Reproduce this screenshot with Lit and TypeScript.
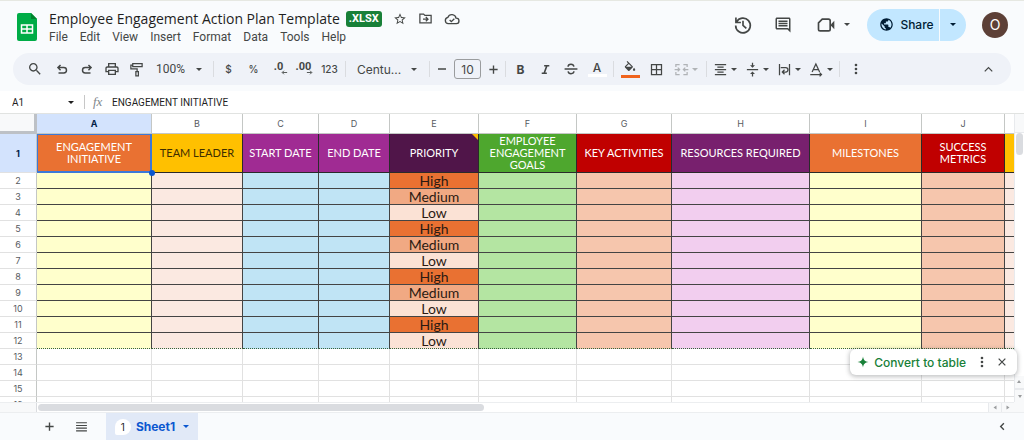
import { LitElement, html, css, svg } from "lit";
import { customElement, state } from "lit/decorators.js";
import { classMap } from "lit/directives/class-map.js";

const stroke = (d: string, w = 2) =>
  svg`<path d=${d} fill="none" stroke="currentColor" stroke-width=${w}></path>`;
const fill = (d: string) => svg`<path d=${d}></path>`;

const ICONS: Record<string, unknown> = {
  search: fill("M15.5 14h-.79l-.28-.27C15.41 12.59 16 11.11 16 9.5 16 5.91 13.09 3 9.5 3S3 5.91 3 9.5 5.91 16 9.5 16c1.61 0 3.09-.59 4.23-1.57l.27.28v.79l5 4.99L20.49 19l-4.99-5zm-6 0C7.01 14 5 11.99 5 9.5S7.01 5 9.5 5 14 7.01 14 9.5 11.99 14 9.5 14z"),
  undo: stroke("M9.500 5L5 9.500l4.500 4.500M5.500 9.500H15a4.700 4.700 0 0 1 0 9.400H6", 2.500),
  redo: stroke("M14.500 5L19 9.500l-4.500 4.500M18.500 9.500H9a4.700 4.700 0 0 0 0 9.400h9", 2.500),
  print: fill("M19 8h-1V3H6v5H5c-1.66 0-3 1.34-3 3v6h4v4h12v-4h4v-6c0-1.66-1.34-3-3-3zM8 5h8v3H8V5zm8 12v2H8v-4h8v2zm2-2v-2H6v2H4v-4c0-.55.45-1 1-1h14c.55 0 1 .45 1 1v4h-2z"),
  paint: stroke("M6 2.500h15v5H6zM6 5H3v6h10v4M11 15.500h4V22h-4z"),
  star: fill("M22 9.24l-7.19-.62L12 2 9.19 8.63 2 9.24l5.46 4.73L5.82 21 12 17.27 18.18 21l-1.63-7.03L22 9.24zM12 15.4l-3.76 2.27 1-4.28-3.32-2.88 4.38-.38L12 6.1l1.71 4.04 4.38.38-3.32 2.88 1 4.28L12 15.4z"),
  move: stroke("M3 19V5h6l2 2h10v12zM8 13h7M12.500 9.500L16 13l-3.500 3.500"),
  cloud: stroke("M6.500 19a4.800 4.800 0 0 1-.6-9.500A6.300 6.300 0 0 1 18 10.600 4.200 4.200 0 0 1 18.500 19zM8.500 13.500l2.500 2.500 4.500-4.500"),
  history: stroke("M4.200 8.500A8.800 8.800 0 1 1 3.200 12.500M3.500 3v6h6M12 7v5.500l4 3.500"),
  comment: fill("M21.99 4c0-1.1-.89-2-1.99-2H4c-1.1 0-2 .9-2 2v12c0 1.1.9 2 2 2h14l4 4-.01-18zM20 4v13.17L18.83 16H4V4h16zM6 12h12v2H6zm0-3h12v2H6zm0-3h12v2H6z"),
  video: svg`${stroke("M7.500 5H15q2 0 2 2v10q0 2-2 2H5q-2 0-2-2V9.500z")}${fill("M18 11l4-4v10l-4-4z")}`,
  globe: fill("M12 2C6.48 2 2 6.48 2 12s4.48 10 10 10 10-4.48 10-10S17.52 2 12 2zm-1 17.93c-3.95-.49-7-3.85-7-7.93 0-.62.08-1.21.21-1.79L9 15v1c0 1.1.9 2 2 2v1.930zm6.900-2.540c-.26-.81-1-1.390-1.900-1.390h-1v-3c0-.55-.45-1-1-1H8v-2h2c.55 0 1-.45 1-1V7h2c1.100 0 2-.9 2-2v-.41c2.930 1.190 5 4.060 5 7.410 0 2.080-.8 3.970-2.100 5.390z"),
  arrowLeft: stroke("M21 12H5M10 6l-6 6 6 6", 3),
  arrowRight: stroke("M3 12h16M14 6l6 6-6 6", 3),
  minus: stroke("M4 12h16", 3),
  plus: stroke("M3 12h18M12 3v18", 3),
  italic: stroke("M9.500 5H19M5 19h9.500M14.500 5l-5 14", 3),
  strike: stroke("M1 12h22M17 8C16.500 5 14 4 12 4c-2.500 0-5 1.500-5 4M7 16c.5 3 3 4 5 4 2.500 0 5-1.500 5-4", 2.500),
  fill: fill("M16.56 8.94L7.62 0 6.21 1.41l2.38 2.38-5.15 5.15c-.59.59-.59 1.54 0 2.12l5.5 5.5c.29.29.68.44 1.06.44s.77-.15 1.06-.44l5.5-5.5c.59-.58.59-1.53 0-2.12zM5.21 10L10 5.21 14.79 10H5.21zM19 11.5s-2 2.17-2 3.5c0 1.1.9 2 2 2s2-.9 2-2c0-1.33-2-3.5-2-3.5z"),
  borders: fill("M3 3v18h18V3H3zm8 16H5v-6h6v6zm0-8H5V5h6v6zm8 8h-6v-6h6v6zm0-8h-6V5h6v6z"),
  merge: stroke("M9 4H3v4M15 4h6v4M9 20H3v-4M15 20h6v-4M1 12h8M6 9l3 3-3 3M23 12h-8M18 9l-3 3 3 3"),
  align: stroke("M3 4h18M7 8h10M3 12h18M7 16h10M3 20h18"),
  valign: fill("M8 19h3v4h2v-4h3l-4-4-4 4zm8-14h-3V1h-2v4H8l4 4 4-4zM3 11v2h18v-2H3z"),
  wrap: stroke("M4 3v18M20 3v18M6 9h8a3.500 3.500 0 0 1 0 7H9M12 12.500L8.500 16l3.500 3.500"),
  rotate: stroke("M5 16L11 3l6 13M7 12h8M2 20h18M17 17l3 3-3 3"),
  dots: fill("M12 8a2 2 0 1 0 0-4 2 2 0 0 0 0 4zm0 6a2 2 0 1 0 0-4 2 2 0 0 0 0 4zm0 6a2 2 0 1 0 0-4 2 2 0 0 0 0 4z"),
  up: stroke("M6 15l6-6 6 6"),
  left: stroke("M15 5l-7 7 7 7", 3),
  menu: stroke("M2 5h20M2 10h20M2 15h20M2 20h20"),
  close: stroke("M4 4l16 16M20 4L4 20", 3),
  spark: fill("M12 1c1 7 4 10 11 11-7 1-10 4-11 11-1-7-4-10-11-11 7-1 10-4 11-11z"),
};

const icon = (name: string, size = 16) => html`<svg
  class="icon"
  width=${size}
  height=${size}
  viewBox="0 0 24 24"
  fill="currentColor"
  aria-hidden="true"
>${ICONS[name]}</svg>`;

const base = css`
  :host,
  * {
    box-sizing: border-box;
  }
  button,
  input,
  select {
    font: inherit;
    color: inherit;
    background: none;
    border: 0;
    margin: 0;
    padding: 0;
    appearance: none;
    min-width: 0;
  }
  button {
    display: flex;
    align-items: center;
    justify-content: center;
    cursor: pointer;
  }
  .icon {
    display: block;
    flex: none;
  }
  .caret {
    flex: none;
    border: 3px solid transparent;
    border-top-color: currentColor;
    border-bottom: 0;
  }
`;

@customElement("title-bar")
class TitleBar extends LitElement {
  static styles = [
    base,
    css`
      :host {
        display: flex;
        align-items: flex-start;
        border-top: 1px solid #e6e8e2;
        padding: 7px 16px 0 17px;
        height: 53px;
        color: #444746;
      }
      .logo {
        flex: none;
        display: block;
        margin-top: 5px;
      }
      .names {
        flex: 1;
        margin-left: 12px;
        min-width: 0;
      }
      .line {
        display: flex;
        align-items: center;
        height: 21px;
        white-space: nowrap;
      }
      h1 {
        margin: 0 6px 0 0;
        font: 400 14px/20px "Google Sans", "Open Sans", sans-serif;
        color: #1f1f1f;
      }
      .badge {
        border-radius: 3px;
        background: #188038;
        color: #fff;
        font-family: Roboto, sans-serif;
        font-size: 11px;
        font-weight: 700;
        line-height: 16px;
        padding: 0 3px;
        margin-right: 5px;
      }
      .small {
        width: 26px;
        height: 20px;
      }
      .menus {
        display: flex;
        gap: 12px;
        font-family: Roboto, sans-serif;
        font-size: 12px;
        line-height: 16px;
      }
      .tools {
        display: flex;
        align-items: center;
        height: 33px;
      }
      .tool {
        width: 40px;
        height: 32px;
      }
      .video {
        width: 56px;
        gap: 8px;
        padding-left: 4px;
        margin-right: 8px;
      }
      .share {
        display: flex;
        height: 32px;
        border-radius: 16px;
        overflow: hidden;
        background: #c2e7ff;
        color: #001d35;
        font-size: 12px;
        font-weight: 500;
        margin-right: 16px;
      }
      .main {
        width: 72px;
        gap: 6px;
        padding-left: 7px;
      }
      .more {
        width: 27px;
        border-left: 1px solid #f9fbfd;
      }
      .avatar {
        width: 26px;
        height: 26px;
        border-radius: 50%;
        background: #5d4037;
        color: #fff;
        font-size: 14px;
      }
    `,
  ];
  render() {
    return html`
      <svg class="logo" width="20" height="28" viewBox="0 0 20 28" aria-hidden="true">
        <path fill="#00ac47" d="M2 0h12l6 6v20q0 2-2 2H2q-2 0-2-2V2q0-2 2-2z"></path>
        <path fill="#00832d" d="M14 0l6 6h-6z"></path>
        <path fill="none" stroke="#fff" stroke-width="1.500" d="M4.500 12h11v8h-11zM4.500 16h11M10 12v8"></path>
      </svg>
      <div class="names">
        <div class="line">
          <h1>Employee Engagement Action Plan Template</h1>
          <span class="badge">.XLSX</span>
          <button class="small" aria-label="Star">${icon("star", 14)}</button>
          <button class="small" aria-label="Move">${icon("move", 15)}</button>
          <button class="small" aria-label="Document status">${icon("cloud", 16)}</button>
        </div>
        <nav class="menus">
          ${["File", "Edit", "View", "Insert", "Format", "Data", "Tools", "Help"].map(
            (m) => html`<button>${m}</button>`,
          )}
        </nav>
      </div>
      <div class="tools">
        <button class="tool" aria-label="Version history">${icon("history", 20)}</button>
        <button class="tool" aria-label="Comments">${icon("comment", 18)}</button>
        <button class="tool video" aria-label="Join a call">
          ${icon("video", 20)}<span class="caret"></span>
        </button>
        <div class="share">
          <button class="main">${icon("globe", 15)}Share</button>
          <button class="more" aria-label="Sharing options"><span class="caret"></span></button>
        </div>
        <button class="avatar" aria-label="Account">O</button>
      </div>
    `;
  }
}

@customElement("tool-bar")
class ToolBar extends LitElement {
  static styles = [
    base,
    css`
      :host {
        display: flex;
        align-items: center;
        height: 32px;
        margin: 0 13px 6px;
        padding: 0 10px 0 9px;
        border-radius: 16px;
        background: #eff2f8;
        color: #444746;
        font-size: 12px;
        overflow: hidden;
      }
      button {
        flex: none;
        width: 25px;
        height: 26px;
      }
      .search {
        margin-right: 2px;
      }
      .pick {
        flex: none;
        display: flex;
        align-items: center;
        width: 62px;
        padding: 0 9px 0 7px;
      }
      .family {
        width: 79px;
        padding: 0 10px 0 9px;
      }
      .pick select {
        flex: 1;
        font-family: Roboto, sans-serif;
        font-size: 12px;
      }
      .family select {
        font-family: Inter, sans-serif;
      }
      .sep {
        flex: none;
        width: 1px;
        height: 16px;
        margin: 0 2px;
        background: #dadce0;
      }
      .glyph {
        font-size: 10px;
        font-weight: 500;
      }
      .decimal {
        flex-direction: column;
        font-family: Roboto, sans-serif;
        line-height: 9px;
        font-size: 11px;
        font-weight: 700;
      }
      .decimal .icon {
        align-self: flex-end;
        margin: -2px 3px 0 0;
      }
      .number {
        width: 27px;
      }
      .step {
        width: 20px;
      }
      .size {
        flex: none;
        width: 27px;
        height: 20px;
        margin: 0 2px;
        border: 1px solid #9a9c9e;
        border-radius: 3px;
        text-align: center;
      }
      .bold {
        font-size: 12px;
        font-weight: 700;
      }
      .color {
        width: 28px;
        flex-direction: column;
        font-weight: 500;
        line-height: 13px;
      }
      .swatch {
        width: 19px;
        height: 3px;
        background: #fff;
      }
      .orange {
        background: #f0641e;
      }
      .drop {
        width: 32px;
        gap: 3px;
        padding-right: 1px;
      }
      .merge {
        width: 35px;
        color: #b0b3b6;
      }
      .kebab {
        width: 28px;
      }
      .collapse {
        margin-left: auto;
      }
    `,
  ];
  private drop(name: string, label: string, extra = "") {
    return html`<button class="drop ${extra}" aria-label=${label}>
      ${icon(name, 15)}<span class="caret"></span>
    </button>`;
  }
  render() {
    const sep = html`<span class="sep"></span>`;
    return html`
      <button class="search" aria-label="Search">${icon("search")}</button>
      <button aria-label="Undo">${icon("undo", 14)}</button>
      <button aria-label="Redo">${icon("redo", 14)}</button>
      <button aria-label="Print">${icon("print")}</button>
      <button aria-label="Paint format">${icon("paint", 15)}</button>
      <label class="pick">
        <select aria-label="Zoom"><option>100%</option></select><span class="caret"></span>
      </label>
      ${sep}
      <button class="glyph">$</button>
      <button class="glyph">%</button>
      <button class="decimal" aria-label="Decrease decimals">.0${icon("arrowLeft", 7)}</button>
      <button class="decimal" aria-label="Increase decimals">.00${icon("arrowRight", 7)}</button>
      <button class="glyph number">123</button>
      ${sep}
      <label class="pick family">
        <select aria-label="Font"><option>Centu...</option></select><span class="caret"></span>
      </label>
      ${sep}
      <button class="step" aria-label="Decrease font size">${icon("minus", 12)}</button>
      <input class="size" aria-label="Font size" value="10" />
      <button class="step" aria-label="Increase font size">${icon("plus", 11)}</button>
      ${sep}
      <button class="bold">B</button>
      <button aria-label="Italic">${icon("italic", 13)}</button>
      <button aria-label="Strikethrough">${icon("strike", 14)}</button>
      <button class="color" aria-label="Text color">A<span class="swatch"></span></button>
      ${sep}
      <button class="color" aria-label="Fill color">
        ${icon("fill", 14)}<span class="swatch orange"></span>
      </button>
      <button aria-label="Borders">${icon("borders", 15)}</button>
      ${this.drop("merge", "Merge cells", "merge")} ${sep}
      ${this.drop("align", "Horizontal align")}${this.drop("valign", "Vertical align")}
      ${this.drop("wrap", "Text wrapping")}${this.drop("rotate", "Text rotation")} ${sep}
      <button class="kebab" aria-label="More">${icon("dots")}</button>
      <button class="collapse" aria-label="Hide the menus">${icon("up", 15)}</button>
    `;
  }
}

@customElement("formula-bar")
class FormulaBar extends LitElement {
  static styles = [
    base,
    css`
      :host {
        display: flex;
        align-items: center;
        height: 22px;
        padding-left: 12px;
        background: #fff;
        color: #1f1f1f;
        font-family: Roboto, sans-serif;
        font-size: 10px;
      }
      .name {
        width: 56px;
      }
      .sep {
        width: 1px;
        height: 14px;
        margin: 0 8px 0 10px;
        background: #c7c7c7;
      }
      .fx {
        width: 19px;
        font: italic 13px/16px "Liberation Serif", serif;
        color: #80868b;
      }
      .value {
        flex: 1;
      }
    `,
  ];
  render() {
    return html`
      <input class="name" aria-label="Name box" value="A1" /><span class="caret"></span>
      <span class="sep"></span>
      <label class="fx" for="formula">fx</label>
      <input class="value" id="formula" value="ENGAGEMENT INITIATIVE" />
    `;
  }
}

interface Column {
  letter: string;
  title: string;
  width: number;
  head: string;
  body: string;
  dark?: boolean;
}

const COLUMNS: Column[] = [
  { letter: "A", title: "ENGAGEMENT INITIATIVE", width: 115, head: "#e97132", body: "#ffffcc" },
  { letter: "B", title: "TEAM LEADER", width: 91, head: "#ffc000", body: "#fbe9e1", dark: true },
  { letter: "C", title: "START DATE", width: 76, head: "#a02b93", body: "#c0e4f5" },
  { letter: "D", title: "END DATE", width: 71, head: "#a02b93", body: "#c0e4f5" },
  { letter: "E", title: "PRIORITY", width: 89, head: "#501549", body: "#fbe2d5" },
  { letter: "F", title: "EMPLOYEE ENGAGEMENT GOALS", width: 98, head: "#4ea72e", body: "#b4e5a2" },
  { letter: "G", title: "KEY ACTIVITIES", width: 95, head: "#c00000", body: "#f6c6ad" },
  { letter: "H", title: "RESOURCES REQUIRED", width: 138, head: "#78206e", body: "#f2ceef" },
  { letter: "I", title: "MILESTONES", width: 112, head: "#e97132", body: "#ffffcc" },
  { letter: "J", title: "SUCCESS METRICS", width: 83, head: "#c00000", body: "#f6c6ad" },
  { letter: "K", title: "", width: 91, head: "#ffc000", body: "#fbe9e1", dark: true },
];

const PRIORITIES = [
  "High", "Medium", "Low", "High", "Medium", "Low",
  "High", "Medium", "Low", "High", "Low",
];
const PRIORITY_COLORS: Record<string, string> = {
  High: "#e97132",
  Medium: "#f1a983",
  Low: "#fbe2d5",
};

const HEAD_HEIGHT = 59;
const ROW_HEIGHT = 16;

@customElement("sheet-grid")
class SheetGrid extends LitElement {
  @state() private emptyRows = 4;

  private observer = new ResizeObserver(([entry]) => {
    const free =
      entry.contentRect.height - 10 - HEAD_HEIGHT - PRIORITIES.length * ROW_HEIGHT;
    this.emptyRows = Math.max(1, Math.ceil(free / ROW_HEIGHT));
  });

  connectedCallback() {
    super.connectedCallback();
    this.observer.observe(this);
  }

  disconnectedCallback() {
    this.observer.disconnect();
    super.disconnectedCallback();
  }

  static styles = [
    base,
    css`
      :host {
        display: grid;
        grid-template-columns: minmax(0, 1fr) 10px;
        grid-template-rows: minmax(0, 1fr) 10px;
        background: #fff;
        position: relative;
        min-height: 0;
        border-top: 1px solid #e1e3e1;
      }
      .view {
        overflow: hidden;
      }
      table {
        table-layout: fixed;
        width: 0;
        border-collapse: separate;
        border-spacing: 0;
      }
      th,
      td {
        padding: 0;
        text-align: center;
        vertical-align: middle;
        border: solid #e1e1e1;
        border-width: 0 1px 1px 0;
        height: 16px;
        line-height: 15px;
        overflow: hidden;
      }
      .index {
        width: 37px;
      }
      .letter,
      .corner {
        height: 20px;
        font-size: 9px;
        font-weight: 400;
        color: #575b5f;
        border-color: #c4c7c5;
      }
      .corner {
        background: #f8f9fa;
        border-width: 0 3px 3px 0;
        border-color: #bdc1c6;
      }
      .number {
        font-size: 9px;
        font-weight: 400;
        color: #575b5f;
        border-right-color: #c4c7c5;
      }
      .active {
        background: #d3e3fd;
        color: #041e49;
        font-weight: 700;
      }
      .title {
        position: relative;
        height: 39px;
        padding: 0 5px;
        font: 400 11px/12px "Century Gothic", Lato, sans-serif;
        color: #fff;
        border-color: #2a2a2a;
      }
      .dark {
        color: #3d2e00;
      }
      .note::after {
        content: "";
        position: absolute;
        top: 0;
        right: 0;
        border: 3px solid #fbbc04;
        border-left-color: transparent;
        border-bottom-color: transparent;
      }
      .selected {
        overflow: visible;
        border-color: #3c78d8;
        box-shadow: inset 0 0 0 1px #3c78d8;
      }
      .handle {
        position: absolute;
        right: -4px;
        bottom: -4px;
        z-index: 1;
        width: 6px;
        height: 6px;
        border-radius: 50%;
        background: #0b57d0;
      }
      .filled {
        font-family: "Century Gothic", Lato, sans-serif;
        font-size: 14px;
        color: #2b1a12;
        border-color: #444;
      }
      .last {
        border-bottom: 1px dotted #34633c;
      }
      .vertical {
        display: flex;
        flex-direction: column;
        background: #fff;
        border-left: 1px solid #e8eaed;
      }
      .cap {
        height: 19px;
        background: #f8f9fa;
        border-bottom: 1px solid #e8eaed;
      }
      .vthumb {
        width: 7px;
        height: 22px;
        margin: 0 1px auto;
        border-radius: 4px;
        background: #dadce0;
      }
      .arrow {
        height: 13px;
        border-top: 1px solid #e8eaed;
        background: #f8f9fa;
        color: #9a9c9e;
      }
      .flip {
        transform: rotate(180deg);
      }
      .arrow .caret {
        border-width: 3px 2px 0;
      }
      .horizontal {
        display: flex;
        align-items: center;
        border-top: 1px solid #eceef0;
      }
      .gutter {
        width: 37px;
        height: 9px;
        background: #f8f9fa;
        border-right: 1px solid #dadce0;
      }
      .hthumb {
        width: 44%;
        height: 7px;
        margin: 0 auto 0 1px;
        border-radius: 4px;
        background: #dadce0;
      }
      .side {
        width: 13px;
        height: 9px;
        border-top: 0;
        border-left: 1px solid #e8eaed;
      }
      .back .caret {
        transform: rotate(90deg);
      }
      .forward .caret {
        transform: rotate(-90deg);
      }
      .end {
        background: #f8f9fa;
      }
      .chip {
        position: absolute;
        right: 7px;
        bottom: 37px;
        display: flex;
        align-items: center;
        height: 26px;
        padding: 0 5px 0 7px;
        border-radius: 6px;
        background: #fff;
        box-shadow: 0 1px 4px 1px rgba(60, 64, 67, 0.3);
        color: #188038;
        font-size: 12px;
        font-weight: 500;
      }
      .convert {
        gap: 5px;
        margin-right: 6px;
      }
      .chip .plain {
        width: 20px;
        height: 20px;
        color: #444746;
      }
    `,
  ];

  private head(c: Column) {
    const selected = c.letter === "A";
    return html`<td
      class=${classMap({ title: true, dark: !!c.dark, note: c.letter === "E", selected })}
      style="background:${c.head}"
    >${c.title}${selected ? html`<span class="handle"></span>` : ""}</td>`;
  }

  private row(priority: string, i: number) {
    const last = i === PRIORITIES.length - 1;
    return html`<tr>
      <th class="number" scope="row">${i + 2}</th>
      ${COLUMNS.map((c) => {
        const isPriority = c.letter === "E";
        const color = isPriority ? PRIORITY_COLORS[priority] : c.body;
        return html`<td class=${classMap({ filled: true, last })} style="background:${color}">${isPriority ? priority : ""}</td>`;
      })}
    </tr>`;
  }

  render() {
    const firstEmpty = PRIORITIES.length + 2;
    return html`
      <div class="view">
        <table>
          <colgroup>
            <col class="index" />
            ${COLUMNS.map((c) => html`<col style="width:${c.width}px" />`)}
          </colgroup>
          <thead>
            <tr>
              <td class="corner"></td>
              ${COLUMNS.map(
                (c) => html`<th scope="col" class=${classMap({ letter: true, active: c.letter === "A" })}>${c.letter}</th>`,
              )}
            </tr>
          </thead>
          <tbody>
            <tr>
              <th class="number active" scope="row">1</th>
              ${COLUMNS.map((c) => this.head(c))}
            </tr>
            ${PRIORITIES.map((p, i) => this.row(p, i))}
            ${Array.from(
              { length: this.emptyRows },
              (_, i) => html`<tr>
                <th class="number" scope="row">${firstEmpty + i}</th>
                ${COLUMNS.map(() => html`<td></td>`)}
              </tr>`,
            )}
          </tbody>
        </table>
      </div>
      <div class="vertical">
        <span class="cap"></span>
        <span class="vthumb"></span>
        <button class="arrow flip" aria-label="Scroll up"><span class="caret"></span></button>
        <button class="arrow" aria-label="Scroll down"><span class="caret"></span></button>
      </div>
      <div class="horizontal">
        <span class="gutter"></span>
        <span class="hthumb"></span>
        <button class="arrow side back" aria-label="Scroll left"><span class="caret"></span></button>
        <button class="arrow side forward" aria-label="Scroll right"><span class="caret"></span></button>
      </div>
      <div class="end"></div>
      <div class="chip">
        <button class="convert">${icon("spark", 12)}Convert to table</button>
        <button class="plain" aria-label="More options">${icon("dots", 16)}</button>
        <button class="plain" aria-label="Close">${icon("close", 10)}</button>
      </div>
    `;
  }
}

@customElement("sheet-tabs")
class SheetTabs extends LitElement {
  static styles = [
    base,
    css`
      :host {
        display: flex;
        height: 28px;
        padding: 0 12px 0 33px;
        background: #f9fbfd;
        border-top: 1px solid #eceef0;
        color: #444746;
      }
      .tool {
        width: 32px;
      }
      .tab {
        gap: 5px;
        width: 92px;
        margin-left: 9px;
        background: #e1e9f7;
        color: #0b57d0;
        font-size: 12px;
        font-weight: 700;
      }
      .count {
        width: 16px;
        height: 16px;
        border-radius: 8px 8px 8px 2px;
        background: #fff;
        color: #1f1f1f;
        font-size: 10px;
        font-weight: 400;
        line-height: 16px;
      }
      .tab .caret {
        margin-left: 3px;
      }
      .toggle {
        width: 20px;
        margin-left: auto;
      }
    `,
  ];
  render() {
    return html`
      <button class="tool" aria-label="Add sheet">${icon("plus", 11)}</button>
      <button class="tool" aria-label="All sheets">${icon("menu", 13)}</button>
      <button class="tab"><span class="count">1</span>Sheet1<span class="caret"></span></button>
      <button class="toggle" aria-label="Show side panel">${icon("left", 11)}</button>
    `;
  }
}

@customElement("app-root")
class AppRoot extends LitElement {
  static styles = css`
    :host {
      display: flex;
      flex-direction: column;
      height: 100vh;
      overflow: hidden;
      background: #f9fbfd;
      font-family: Inter, Roboto, sans-serif;
    }
    .grid {
      flex: 1;
    }
  `;
  render() {
    return html`
      <title-bar></title-bar>
      <tool-bar></tool-bar>
      <formula-bar></formula-bar>
      <sheet-grid class="grid"></sheet-grid>
      <sheet-tabs></sheet-tabs>
    `;
  }
}
